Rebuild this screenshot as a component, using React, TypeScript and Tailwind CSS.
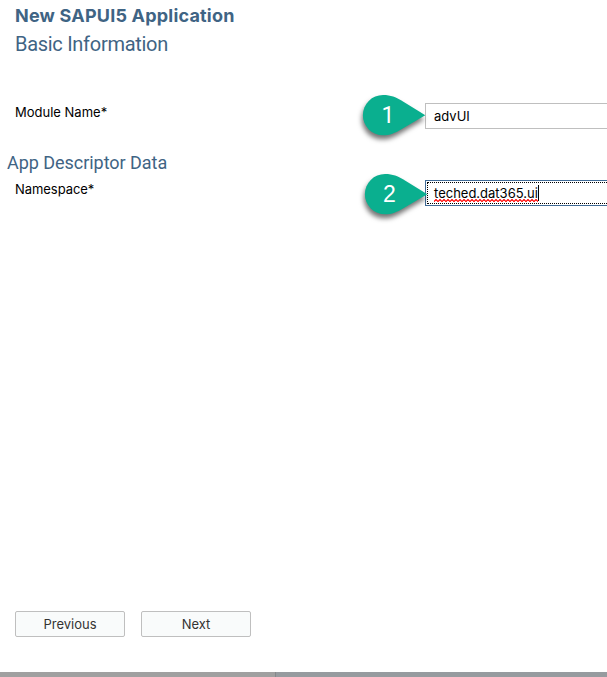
import React from "react";

type MarkerProps = { label: string; className: string; labelClassName: string };

function Marker({ label, className, labelClassName }: MarkerProps) {
  return (
    <div className={`absolute h-[56px] w-[76px] ${className}`}>
      <svg width="76" height="56" viewBox="0 0 76 56" className="block overflow-visible" style={{ filter: "drop-shadow(-1px 4px 2.5px rgba(0,0,0,0.55))" }}>
        <path d="M20 0 C28 0 33 2.500 38 5.200 L62.300 20.300 L38 34.500 C32 38 27 40.300 20 40.300 A20.150 20.150 0 0 1 20 0Z" fill="#0aaf8f" />
      </svg>
      <span className={`absolute left-0 top-[7px] text-center text-[23px] leading-[27px] text-white ${labelClassName}`}>
        {label}
      </span>
    </div>
  );
}

function SpellingMark() {
  return (
    <svg width="104" height="3" className="absolute left-0 top-[15px]">
      <defs>
        <pattern id="squiggle" width="4" height="3" patternUnits="userSpaceOnUse">
          <path d="M-1 1.500 L0 2.500 L2 0.500 L4 2.500 L5 1.500" fill="none" stroke="#ff0000" strokeWidth="1.2" />
        </pattern>
      </defs>
      <rect width="104" height="3" fill="url(#squiggle)" />
    </svg>
  );
}

export default function App() {
  return (
    <main className="flex h-[677px] w-[607px] flex-col overflow-hidden bg-white font-['Inter',sans-serif] text-[13px] text-black">
      <header className="pl-[15px] pt-[2px] text-[#3f6484]">
        <h1 className="text-[18px] font-bold leading-[28px] tracking-[0.2px]">New SAPUI5 Application</h1>
        <h2 className="font-['Roboto',sans-serif] text-[20px] leading-[28px] tracking-[-0.29px]">Basic Information</h2>
      </header>

      <section className="mt-[45px] flex h-[26px] items-start">
        <label className="w-[425px] shrink-0 pl-[15px] leading-[18px]">Module Name*</label>
        <div className="relative h-[26px] w-[190px] shrink-0 border border-[#bfbfbf] pl-[8px] leading-[25px]">
          advUI
          <Marker label="1" className="-left-[63px] -top-[9px]" labelClassName="w-[50px] font-['Roboto',sans-serif]" />
        </div>
      </section>

      <h3 className="mt-[20px] pl-[7px] font-['Roboto',sans-serif] text-[18px] leading-[28px] tracking-[-0.04px] text-[#3f6484]">App Descriptor Data</h3>

      <section className="mt-[3px] flex h-[26px] items-start">
        <label className="w-[425px] shrink-0 pl-[15px] leading-[18px] tracking-[-0.05px]">Namespace*</label>
        <div className="relative h-[26px] w-[190px] shrink-0 border border-[#3f6a96] p-px">
          <div className="flex h-full items-center border border-dotted border-black pl-[6px]">
            <span className="relative leading-[18px]">
              teched.dat365.ui
              <SpellingMark />
            </span>
            <span className="h-[16px] w-px bg-black" />
          </div>
          <Marker label="2" className="-left-[61px] -top-[7px]" labelClassName="w-[49px] font-['Liberation_Sans',sans-serif]" />
        </div>
      </section>

      <div className="mt-auto flex gap-4 pb-[35px] pl-[15px] text-[#333333]">
        <button className="h-[26px] w-[110px] rounded-[2px] border border-[#bfbfbf] bg-[#f9fbfb] pt-[2px]">Previous</button>
        <button className="h-[26px] w-[110px] rounded-[2px] border border-[#bfbfbf] bg-[#f9fbfb] pt-[2px]">Next</button>
      </div>

      <footer className="flex h-[5px] shrink-0">
        <div className="w-[276px] border-r border-[#85888b] bg-[#a0a0a0]" />
        <div className="flex-1 bg-[#969b9f]" />
      </footer>
    </main>
  );
}
